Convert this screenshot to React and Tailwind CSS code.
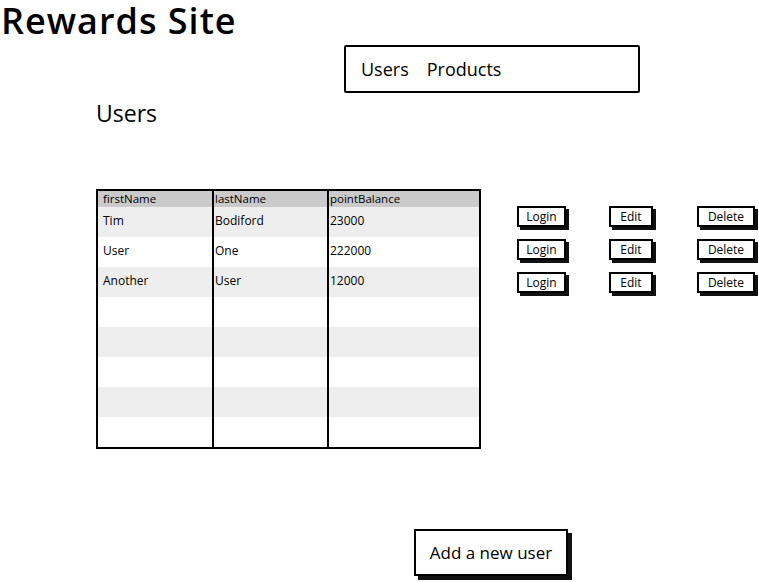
import React from 'react';

const users = [
  { first: 'Tim', last: 'Bodiford', points: '23000' },
  { first: 'User', last: 'One', points: '222000' },
  { first: 'Another', last: 'User', points: '12000' },
  { first: '', last: '', points: '' },
  { first: '', last: '', points: '' },
  { first: '', last: '', points: '' },
  { first: '', last: '', points: '' },
  { first: '', last: '', points: '' },
];

const font = { fontFamily: '"Open Sans", "DejaVu Sans", sans-serif' };

const SketchButton = ({ label, className }) => (
  <div className={`h-[21px] border-2 border-black bg-white shadow-[3px_3px_0_#111] flex items-center justify-center text-[12px] text-black ${className}`}>
    {label}
  </div>
);

const App = () => {
  return (
    <div className="w-[759px] h-[582px] bg-white text-black overflow-hidden" style={font}>
      <h1 className="text-[36px] leading-[40px] font-semibold pl-[1px] pt-[1px] tracking-[1px]">Rewards Site</h1>

      <div className="ml-[344px] mt-[4px] w-[296px] h-[48px] border-2 border-black rounded-[2px] flex items-center pl-[15px] gap-[18px] text-[18px] font-medium">
        <span>Users</span>
        <span>Products</span>
      </div>

      <h2 className="ml-[96px] mt-[5px] text-[23px] leading-[30px] font-medium">Users</h2>

      <div className="flex mt-[61px]">
        <div className="ml-[96px] w-[385px] border-2 border-black">
          <div className="flex h-[16px] bg-[#cacaca] text-[11.5px] leading-[16px]">
            <div className="w-[116px] border-r-2 border-black pl-[5px]">firstName</div>
            <div className="w-[115px] border-r-2 border-black pl-[1px]">lastName</div>
            <div className="flex-1 pl-[1px]">pointBalance</div>
          </div>
          {users.map((u, i) => (
            <div key={i} className={`flex h-[30px] text-[12px] leading-[28px] ${i % 2 === 0 ? 'bg-[#eeeeee]' : 'bg-white'}`}>
              <div className="w-[116px] border-r-2 border-black pl-[5px]">{u.first}</div>
              <div className="w-[115px] border-r-2 border-black pl-[1px]">{u.last}</div>
              <div className="flex-1 pl-[1px]">{u.points}</div>
            </div>
          ))}
        </div>

        <div className="ml-[36px] mt-[17px] flex flex-col gap-[12px]">
          {users.slice(0, 3).map((u, i) => (
            <div key={i} className="flex">
              <SketchButton label="Login" className="w-[49px]" />
              <SketchButton label="Edit" className="w-[44px] ml-[43px]" />
              <SketchButton label="Delete" className="w-[58px] ml-[44px]" />
            </div>
          ))}
        </div>
      </div>

      <div className="ml-[414px] mt-[80px] w-[154px] h-[47px] border-2 border-black bg-white shadow-[4px_4px_0_#111] flex items-center justify-center text-[17px] font-medium">
        Add a new user
      </div>
    </div>
  );
};

export default App;
